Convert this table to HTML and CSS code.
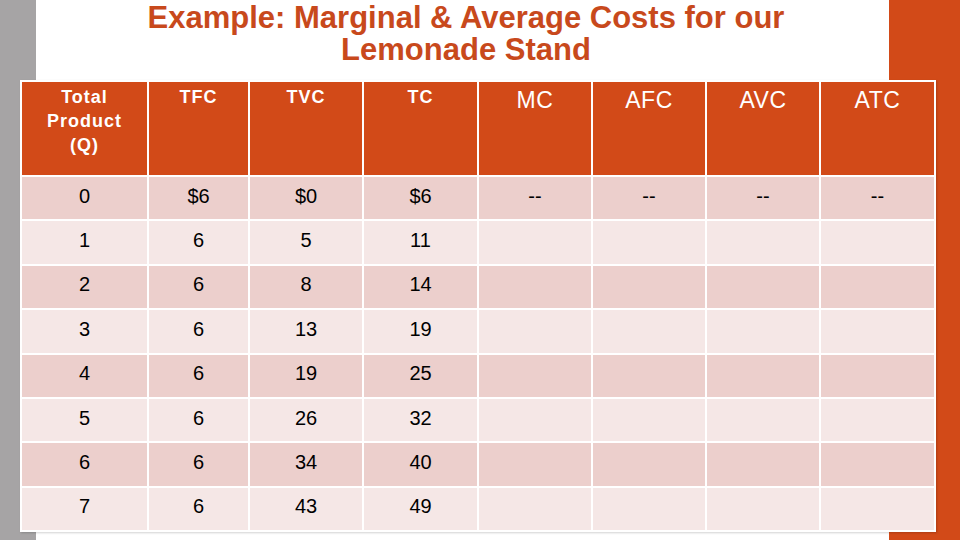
FILE: index.html
```html
<!DOCTYPE html>
<html>
<head>
<meta charset="utf-8">
<link rel="stylesheet" href="styles.css">
</head>
<body>
<div class="slide">
  <div class="bg">
    <div class="bg-left"></div>
    <div class="bg-mid"></div>
    <div class="bg-right"></div>
  </div>
  <div class="content">
    <h1 class="title">Example: Marginal &amp; Average Costs for our<br>Lemonade Stand</h1>
    <table class="costs">
      <thead>
        <tr>
          <th class="c1 small">Total<br>Product<br>(Q)</th>
          <th class="c2 small">TFC</th>
          <th class="c3 small">TVC</th>
          <th class="c4 small">TC</th>
          <th class="c5 big">MC</th>
          <th class="c6 big">AFC</th>
          <th class="c7 big">AVC</th>
          <th class="c8 big">ATC</th>
        </tr>
      </thead>
      <tbody>
        <tr class="odd"><td>0</td><td>$6</td><td>$0</td><td>$6</td><td>--</td><td>--</td><td>--</td><td>--</td></tr>
        <tr class="even"><td>1</td><td>6</td><td>5</td><td>11</td><td></td><td></td><td></td><td></td></tr>
        <tr class="odd"><td>2</td><td>6</td><td>8</td><td>14</td><td></td><td></td><td></td><td></td></tr>
        <tr class="even"><td>3</td><td>6</td><td>13</td><td>19</td><td></td><td></td><td></td><td></td></tr>
        <tr class="odd"><td>4</td><td>6</td><td>19</td><td>25</td><td></td><td></td><td></td><td></td></tr>
        <tr class="even"><td>5</td><td>6</td><td>26</td><td>32</td><td></td><td></td><td></td><td></td></tr>
        <tr class="odd"><td>6</td><td>6</td><td>34</td><td>40</td><td></td><td></td><td></td><td></td></tr>
        <tr class="even"><td>7</td><td>6</td><td>43</td><td>49</td><td></td><td></td><td></td><td></td></tr>
      </tbody>
    </table>
  </div>
</div>
</body>
</html>
```

FILE: styles.css
```css
html, body {
  margin: 0;
  padding: 0;
  background: #ffffff;
}

.slide {
  width: 960px;
  height: 540px;
  display: grid;
  overflow: hidden;
  font-family: "Liberation Sans", Arial, sans-serif;
}

.bg {
  grid-area: 1 / 1;
  display: flex;
}

.bg-left {
  width: 36px;
  background: #a6a4a5;
}

.bg-mid {
  flex: 1;
  background: #ffffff;
}

.bg-right {
  width: 71px;
  background: #d24a18;
}

.content {
  grid-area: 1 / 1;
  display: flex;
  flex-direction: column;
}

.title {
  margin: 0;
  padding: 2px 0 0 43px;
  width: 889px;
  height: 80px;
  box-sizing: border-box;
  text-align: center;
  font-size: 31px;
  line-height: 32px;
  font-weight: bold;
  color: #c8491c;
}

.costs {
  margin-left: 20px;
  width: 914px;
  border-collapse: separate;
  border-spacing: 2px;
  background: #ffffff;
  table-layout: fixed;
  box-shadow: 1px 1px 2px rgba(0, 0, 0, 0.18);
}

.costs th {
  background: #d24a18;
  color: #ffffff;
  height: 93px;
  box-sizing: border-box;
  vertical-align: top;
  text-align: center;
  padding: 0;
}

.costs th.small {
  font-size: 18px;
  line-height: 24px;
  font-weight: bold;
  letter-spacing: 1px;
  padding-top: 3px;
}

.costs th.big {
  font-size: 23px;
  line-height: 26px;
  font-weight: normal;
  letter-spacing: 0.5px;
  padding-top: 5px;
}

.c1 { width: 125px; }
.c2 { width: 99px; }
.c3 { width: 112px; }
.c4 { width: 113px; }
.c5 { width: 112px; }
.c6 { width: 112px; }
.c7 { width: 112px; }
.c8 { width: 113px; }

.costs td {
  height: 42.4px;
  padding: 0 0 4px 0;
  box-sizing: border-box;
  text-align: center;
  vertical-align: middle;
  font-size: 20px;
  color: #000000;
}

.odd td {
  background: #eccfcc;
}

.even td {
  background: #f5e7e6;
}
```
